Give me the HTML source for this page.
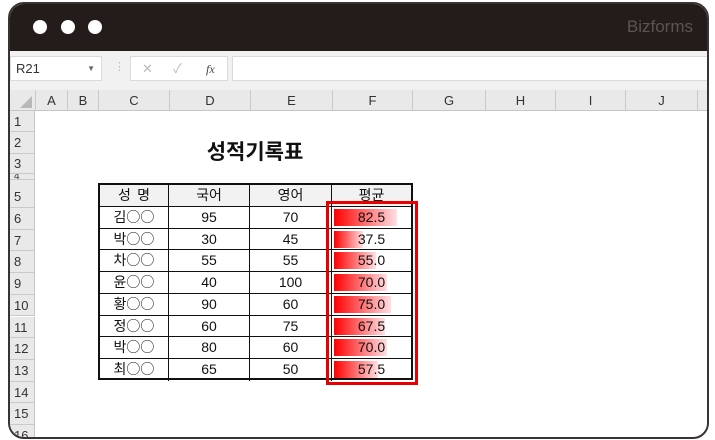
<!DOCTYPE html>
<html><head><meta charset="utf-8"><style>
*{margin:0;padding:0;box-sizing:border-box}
body{width:715px;height:440px;background:#fff;position:relative;overflow:hidden;font-family:"Liberation Sans","Noto Sans CJK KR",sans-serif}
.a{position:absolute}
.frame{left:8px;top:2px;width:701px;height:437px;border:2px solid #3a3333;border-radius:16px;overflow:hidden;background:#fff}
.ttl{left:0;top:0;width:100%;height:47px;background:#231c1a}
.dot{width:14px;height:14px;border-radius:50%;background:#fff;top:16px}
.fb{left:0;top:47px;width:100%;height:40px;background:#f1f1f1}
.box{background:#fff;border:1px solid #dadada}
.ch{top:86px;left:0;width:100%;height:21px;background:#e9e9e9;border-bottom:1px solid #c6c6c6;font-size:13px;color:#333}
.ch div{position:absolute;top:0;height:20px;line-height:21px;text-align:center;border-right:1px solid #c9c9c9}
.rh{left:0;width:25px;background:#e9e9e9;border-right:1px solid #c6c6c6;border-bottom:1px solid #c9c9c9;font-size:13px;color:#333;padding-left:4px;overflow:hidden}
.t{font-size:14px;color:#111;text-align:center;line-height:21px}
.nm{font-family:"Noto Sans CJK KR",sans-serif;font-size:14px;line-height:20px}
</style></head><body>
<div class="a frame">
 <div class="a ttl"></div>
 <div class="a dot" style="left:23px"></div><div class="a dot" style="left:51px"></div><div class="a dot" style="left:78px"></div>
 <div class="a" style="right:14px;top:13px;color:#5a5452;font-size:17px">Bizforms</div>
 <div class="a fb"></div>
 <div class="a box" style="left:0;top:52px;width:92px;height:25px;font-size:13px;color:#333;line-height:24px;padding-left:5px">R21<span style="position:absolute;right:6px;font-size:8px;color:#666">▼</span></div>
 <div class="a" style="left:104px;top:56px;color:#bbb;font-size:11px">⋮</div>
 <div class="a box" style="left:120px;top:52px;width:98px;height:25px;color:#bbb;font-size:13px;line-height:24px"><span style="position:absolute;left:11px">✕</span><span style="position:absolute;left:42px">✓</span><span style="position:absolute;left:75px;color:#444;font-style:italic;font-family:'Liberation Serif',serif;font-size:12px">fx</span></div>
 <div class="a box" style="left:222px;top:52px;width:480px;height:25px"></div>
 <div class="a ch">
  <div style="left:0;width:26px;background:#e9e9e9"><span style="position:absolute;left:10px;top:6px;width:0;height:0;border-left:12px solid transparent;border-bottom:12px solid #b8b8b8"></span></div>
  <div style="left:26px;width:32px">A</div><div style="left:58px;width:31px">B</div><div style="left:89px;width:71px">C</div><div style="left:160px;width:81px">D</div><div style="left:241px;width:82px">E</div><div style="left:323px;width:80px">F</div><div style="left:403px;width:73px">G</div><div style="left:476px;width:70px">H</div><div style="left:546px;width:70px">I</div><div style="left:616px;width:72px">J</div>
 </div>
 <div class="a rh" style="top:107px;height:21px;line-height:21px">1</div>
 <div class="a rh" style="top:128px;height:22px;line-height:22px">2</div>
 <div class="a rh" style="top:150px;height:20px;line-height:20px">3</div>
 <div class="a rh" style="top:170px;height:6px;line-height:6px;font-size:10px">4</div>
 <div class="a rh" style="top:176px;height:8px"></div>
 <div class="a rh" style="top:182px;height:22px;line-height:22px">5</div>
 <div class="a rh" style="top:204px;height:21.7px;line-height:21px">6</div>
 <div class="a rh" style="top:225.7px;height:21.7px;line-height:21px">7</div>
 <div class="a rh" style="top:247.4px;height:21.7px;line-height:21px">8</div>
 <div class="a rh" style="top:269.1px;height:21.7px;line-height:21px">9</div>
 <div class="a rh" style="top:290.8px;height:21.7px;line-height:21px">10</div>
 <div class="a rh" style="top:312.5px;height:21.7px;line-height:21px">11</div>
 <div class="a rh" style="top:334.2px;height:21.7px;line-height:21px">12</div>
 <div class="a rh" style="top:355.9px;height:21.7px;line-height:21px">13</div>
 <div class="a rh" style="top:377.6px;height:21.7px;line-height:21px">14</div>
 <div class="a rh" style="top:399.3px;height:21.7px;line-height:21px">15</div>
 <div class="a rh" style="top:421px;height:21.7px;line-height:21px">16</div>
</div>
<div class="a" style="left:98px;top:136px;width:314px;text-align:center;font-size:21px;font-weight:bold;color:#111;font-family:'Noto Sans CJK KR',sans-serif;line-height:30px">성적기록표</div>
<div class="a" style="left:98px;top:183px;width:315px;height:197px;border:2px solid #111"></div>
<div class="a" id="tb" style="left:100px;top:185px;width:311px"></div>
<div class="a" style="left:326px;top:201px;width:92px;height:184px;border:3px solid #e80000"></div>
<script>
var rows=[["성&nbsp;&nbsp;명","국어","영어","평균"],["김○○",95,70,"82.5"],["박○○",30,45,"37.5"],["차○○",55,55,"55.0"],["윤○○",40,100,"70.0"],["황○○",90,60,"75.0"],["정○○",60,75,"67.5"],["박○○",80,60,"70.0"],["최○○",65,50,"57.5"]];
var xs=[0,69,150,232,311],h="";
rows.forEach(function(r,i){var y=i*21.75;
 for(var c=0;c<4;c++){
  var bg=i==0?"#f2f2f2":"transparent";
  var st="left:"+xs[c]+"px;top:"+y+"px;width:"+(xs[c+1]-xs[c])+"px;height:21.75px;background:"+bg+";"+(c<3?"border-right:1px solid #111;":"")+(i<8?"border-bottom:1px solid #111;":"");
  var inner=r[c],cls="a t"+((c==0||i==0)?" nm":"");
  if(c==3&&i>0){var w=parseFloat(r[c])*0.76;
   inner='<div class="a" style="left:2px;top:2px;height:17px;width:'+w+'px;background:linear-gradient(90deg,#ff0000,#ffe0e3)"></div><div class="a" style="left:0;width:100%;top:0;text-align:center">'+r[c]+'</div>';}
  h+='<div class="'+cls+'" style="'+st+'">'+inner+'</div>';
 }});
document.getElementById("tb").innerHTML=h;
</script>
</body></html>
